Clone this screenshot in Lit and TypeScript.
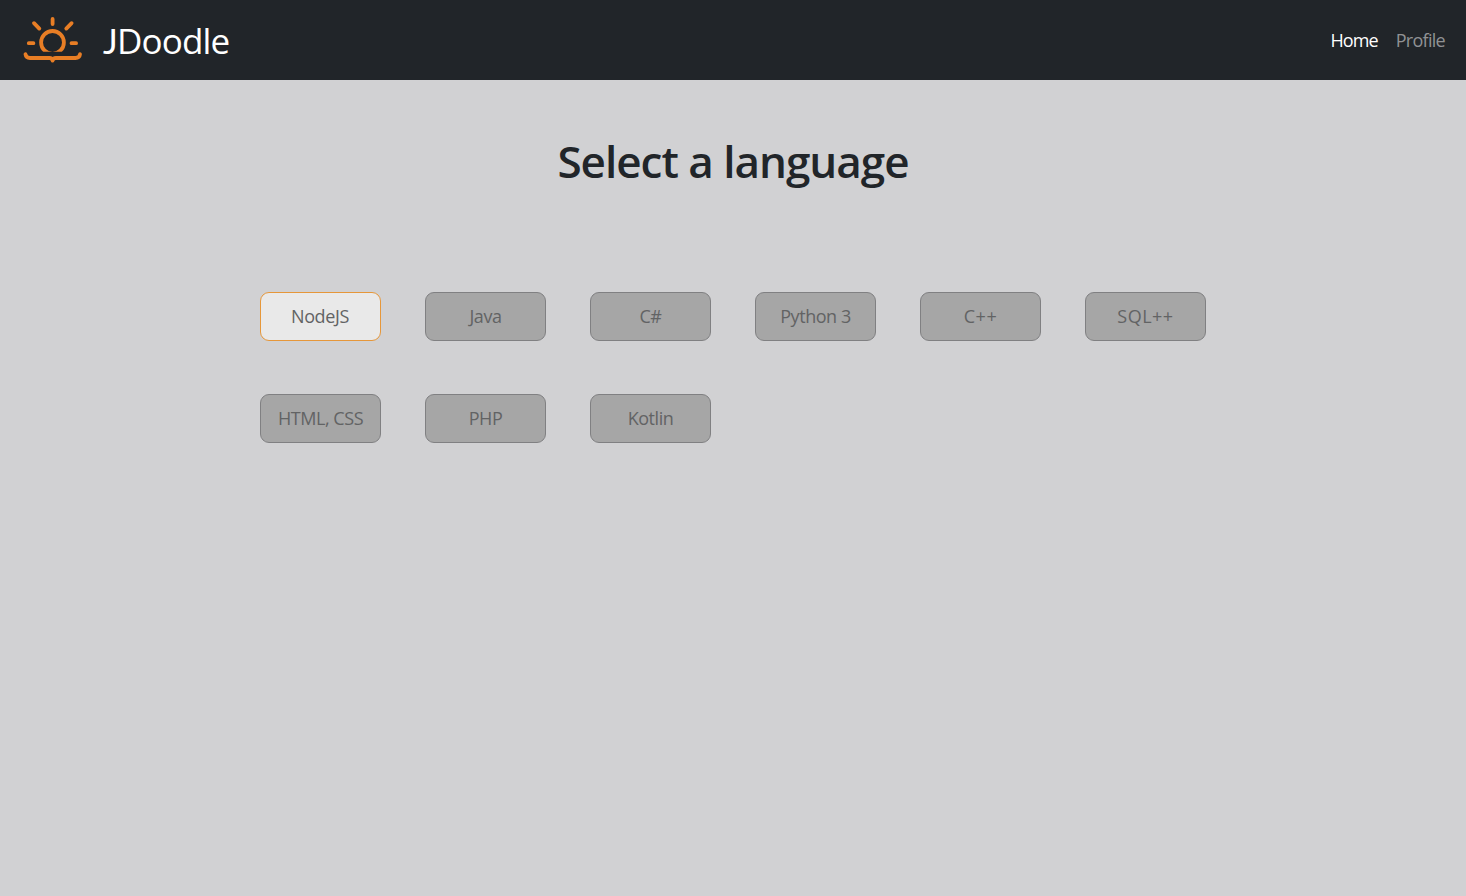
import { LitElement, html, css } from "lit";
import { customElement, state } from "lit/decorators.js";
import { classMap } from "lit/directives/class-map.js";

const LANGUAGES = ["NodeJS", "Java", "C#", "Python 3", "C++", "SQL++", "HTML, CSS", "PHP", "Kotlin"];

@customElement("app-root")
export class AppRoot extends LitElement {
  @state() private selected = "NodeJS";

  static styles = css`
    :host {
      display: block;
      min-height: 100vh;
      background: #d1d1d3;
      color: #212529;
      font-family: "Segoe UI", "Open Sans", "Noto Sans", sans-serif;
    }
    * { box-sizing: border-box; }
    .bar {
      display: flex;
      align-items: center;
      justify-content: space-between;
      height: 80px;
      padding: 0 21px 0 22px;
      background: #212529;
    }
    .brand { display: flex; align-items: center; gap: 19px; color: #fff; }
    .logo { display: block; }
    .name { font-size: 35px; line-height: 50px; letter-spacing: -0.85px; white-space: nowrap; }
    .name::first-letter { font-family: "Segoe UI", Lato, sans-serif; }
    .links { display: flex; gap: 18px; padding-top: 1px; font-size: 18px; line-height: 27px; letter-spacing: -0.7px; }
    .link { color: #909294; }
    .link.active { color: #fff; letter-spacing: -0.95px; }
    .title {
      margin: 0;
      padding-top: 54px;
      font-size: 44px;
      line-height: 54px;
      font-weight: 600;
      letter-spacing: -1px;
      text-align: center;
    }
    .grid {
      display: grid;
      grid-template-columns: repeat(6, 121px);
      gap: 53px 44px;
      justify-content: center;
      padding-top: 104px;
    }
    .lang {
      height: 49px;
      padding: 0;
      border: 1px solid #808082;
      border-radius: 9px;
      background: #a6a6a6;
      color: #626364;
      font: inherit;
      font-size: 18px;
      line-height: 27px;
      letter-spacing: -0.45px;
      white-space: nowrap;
    }
    .lang.symbols { letter-spacing: 0.5px; }
    .lang.on { padding-right: 1px; background: #e9e9e9; border-color: #e6973a; letter-spacing: -0.35px; }
  `;

  render() {
    return html`
      <header class="bar">
        <div class="brand">
          <svg class="logo" width="62" height="52" viewBox="22 14 62 52" fill="none" stroke="#e87e25" stroke-width="3.8" stroke-linecap="round" stroke-linejoin="round">
            <clipPath id="horizon"><rect x="36" y="26" width="33" height="25.7" /></clipPath>
            <circle cx="52.5" cy="42.4" r="11.4" clip-path="url(#horizon)" />
            <path d="M52.6 19v5M34 23.2l5.3 5.4M71.6 23.2l-5.3 5.4M28.8 43.2h4.6M71.5 43.2h4.6" />
            <path d="M25.5 54.2Q26 58 30 58H49.5Q52 58 52.6 60.6Q53.3 58 55.8 58H75.5Q79.5 58 80 54.2" />
          </svg>
          <span class="name">JDoodle</span>
        </div>
        <nav class="links">
          <span class="link active">Home</span>
          <span class="link">Profile</span>
        </nav>
      </header>
      <main>
        <h1 class="title">Select a language</h1>
        <div class="grid">
          ${LANGUAGES.map(
            (name) => html`<button
              class=${classMap({ lang: true, symbols: name.endsWith("++"), on: name === this.selected })}
              @click=${() => (this.selected = name)}
            >${name}</button>`
          )}
        </div>
      </main>
    `;
  }
}
